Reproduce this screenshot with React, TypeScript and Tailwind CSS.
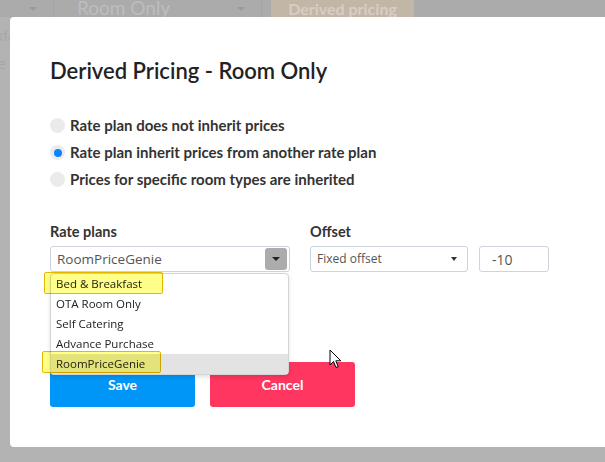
import React from "react";

const lato = { fontFamily: "Lato, 'Open Sans', sans-serif" };
const ui = { fontFamily: "'Open Sans', 'Noto Sans', sans-serif" };

function Radio({ checked, label }: { checked?: boolean; label: string }) {
  return (
    <div className="flex items-center h-[27px] gap-[5px]">
      <span className="w-[15px] h-[15px] rounded-full bg-[#ebebeb] flex items-center justify-center">
        {checked && <span className="w-[8px] h-[8px] rounded-full bg-[#0a84ff]" />}
      </span>
      <span className="text-[15px] font-bold text-[#333]" style={lato}>
        {label}
      </span>
    </div>
  );
}

function Caret({ color }: { color: string }) {
  return (
    <span
      className="w-0 h-0 border-l-[4px] border-r-[4px] border-t-[4px] border-l-transparent border-r-transparent"
      style={{ borderTopColor: color }}
    />
  );
}

export default function App() {
  const items = ["Bed & Breakfast", "OTA Room Only", "Self Catering", "Advance Purchase", "RoomPriceGenie"];
  return (
    <div className="relative w-[605px] h-[462px] overflow-hidden bg-[#b3b3b3]">
      {/* background page (dimmed) */}
      <div className="flex items-center h-[17px] bg-[#ababab] overflow-hidden" style={lato}>
        <span className="ml-[29px] flex">
          <Caret color="#9a9a9a" />
        </span>
        <span className="ml-[16px] w-px h-[17px] bg-[#a3a3a3]" />
        <span className="ml-[23px] w-[160px] text-[19px] text-[#bdbdbd] leading-[17px] -mt-[3px] whitespace-nowrap">Room Only</span>
        <span className="flex">
          <Caret color="#9a9a9a" />
        </span>
        <span className="ml-[16px] w-px h-[17px] bg-[#a3a3a3]" />
        <span className="ml-[9px] w-[143px] h-[17px] bg-[#c2b6a6] flex items-center justify-center text-[16px] font-bold text-[#d6cec4] leading-none whitespace-nowrap">
          Derived pricing
        </span>
      </div>
      <div className="absolute left-0 top-[28px] text-[14px] leading-[16px] text-[#a6a6a6] w-[10px] overflow-hidden whitespace-nowrap" style={ui}>
        <span className="ml-[-4px]">kfa</span>
      </div>
      <div className="absolute left-0 top-[56px] text-[14px] leading-[16px] text-[#a6a6a6] w-[10px] overflow-hidden whitespace-nowrap" style={ui}>
        <span className="ml-[-2px]">e</span>
      </div>

      {/* modal */}
      <div className="absolute left-[10px] top-[17px] w-[620px] h-[430px] bg-white rounded-[4px] pl-[40px] pt-[40px]">
        <h1 className="text-[22px] leading-[28px] font-semibold text-[#222]" style={lato}>
          Derived Pricing - Room Only
        </h1>

        <div className="mt-[27px] flex flex-col">
          <Radio label="Rate plan does not inherit prices" />
          <Radio checked label="Rate plan inherit prices from another rate plan" />
          <Radio label="Prices for specific room types are inherited" />
        </div>

        <div className="mt-[29px] flex gap-[20px]">
          <div className="relative w-[240px]">
            <div className="h-[20px] text-[14.5px] font-bold text-[#333] leading-[20px]" style={lato}>Rate plans</div>
            <div className="mt-[4px] h-[26px] border border-[#cfd3dc] rounded-[3px] flex items-center justify-between pl-[6px] pr-[2px]" style={ui}>
              <span className="text-[13.5px] text-[#555]">RoomPriceGenie</span>
              <span className="w-[22px] h-[22px] bg-[#acacac] rounded-[3px] flex items-center justify-center">
                <Caret color="#222" />
              </span>
            </div>
            {/* open dropdown list */}
            <div className="absolute left-0 top-[51px] w-[239px] bg-white border border-[#d4d4d4] rounded-[4px] shadow-[0_2px_4px_rgba(0,0,0,0.12)] z-10" style={ui}>
              {items.map((it, i) => (
                <div
                  key={it}
                  className={`h-[20px] flex items-center pl-[5px] text-[11.5px] text-[#222] ${i === 4 ? "bg-[#e3e3e3]" : ""}`}
                >
                  {it}
                </div>
              ))}
              <div className="absolute left-[-7px] top-[-2px] w-[119px] h-[22px] bg-[#ffff55]/70 border-[1.5px] border-[#e8b800] rounded-[2px] mix-blend-multiply" />
              <div className="absolute left-[-9px] top-[77px] w-[119px] h-[22px] bg-[#ffff55]/70 border-[1.5px] border-[#e8b800] rounded-[2px] mix-blend-multiply" />
            </div>
          </div>
          <div>
            <div className="h-[20px] text-[14.5px] font-bold text-[#333] leading-[20px]" style={lato}>Offset</div>
            <div className="mt-[4px] flex gap-[11px]">
              <div className="w-[158px] h-[26px] border border-[#cfd3dc] rounded-[3px] flex items-center justify-between pl-[6px] pr-[10px]" style={ui}>
                <span className="text-[12px] text-[#555]">Fixed offset</span>
                <span className="w-0 h-0 border-l-[3.5px] border-r-[3.5px] border-t-[4px] border-l-transparent border-r-transparent border-t-[#333]" />
              </div>
              <div className="w-[70px] h-[26px] border border-[#cfd3dc] rounded-[3px] flex items-center pl-[12px] text-[14px] text-[#555]" style={ui}>
                -10
              </div>
            </div>
          </div>
        </div>

        <div className="mt-[90px] flex gap-[15px]" style={lato}>
          <button className="w-[145px] h-[45px] rounded-[3px] bg-[#0096f7] text-white font-bold text-[14px]">Save</button>
          <button className="w-[145px] h-[45px] rounded-[3px] bg-[#fe3660] text-white font-bold text-[14px]">Cancel</button>
        </div>
      </div>

      {/* mouse cursor */}
      <svg className="absolute left-[329px] top-[349px]" width="14" height="20" viewBox="0 0 14 20">
        <path d="M1 1 L1 16 L4.5 12.5 L7 18.5 L9.2 17.6 L6.8 11.8 L11.8 11.8 Z" fill="white" stroke="black" strokeWidth="1" strokeLinejoin="round" />
      </svg>
    </div>
  );
}
